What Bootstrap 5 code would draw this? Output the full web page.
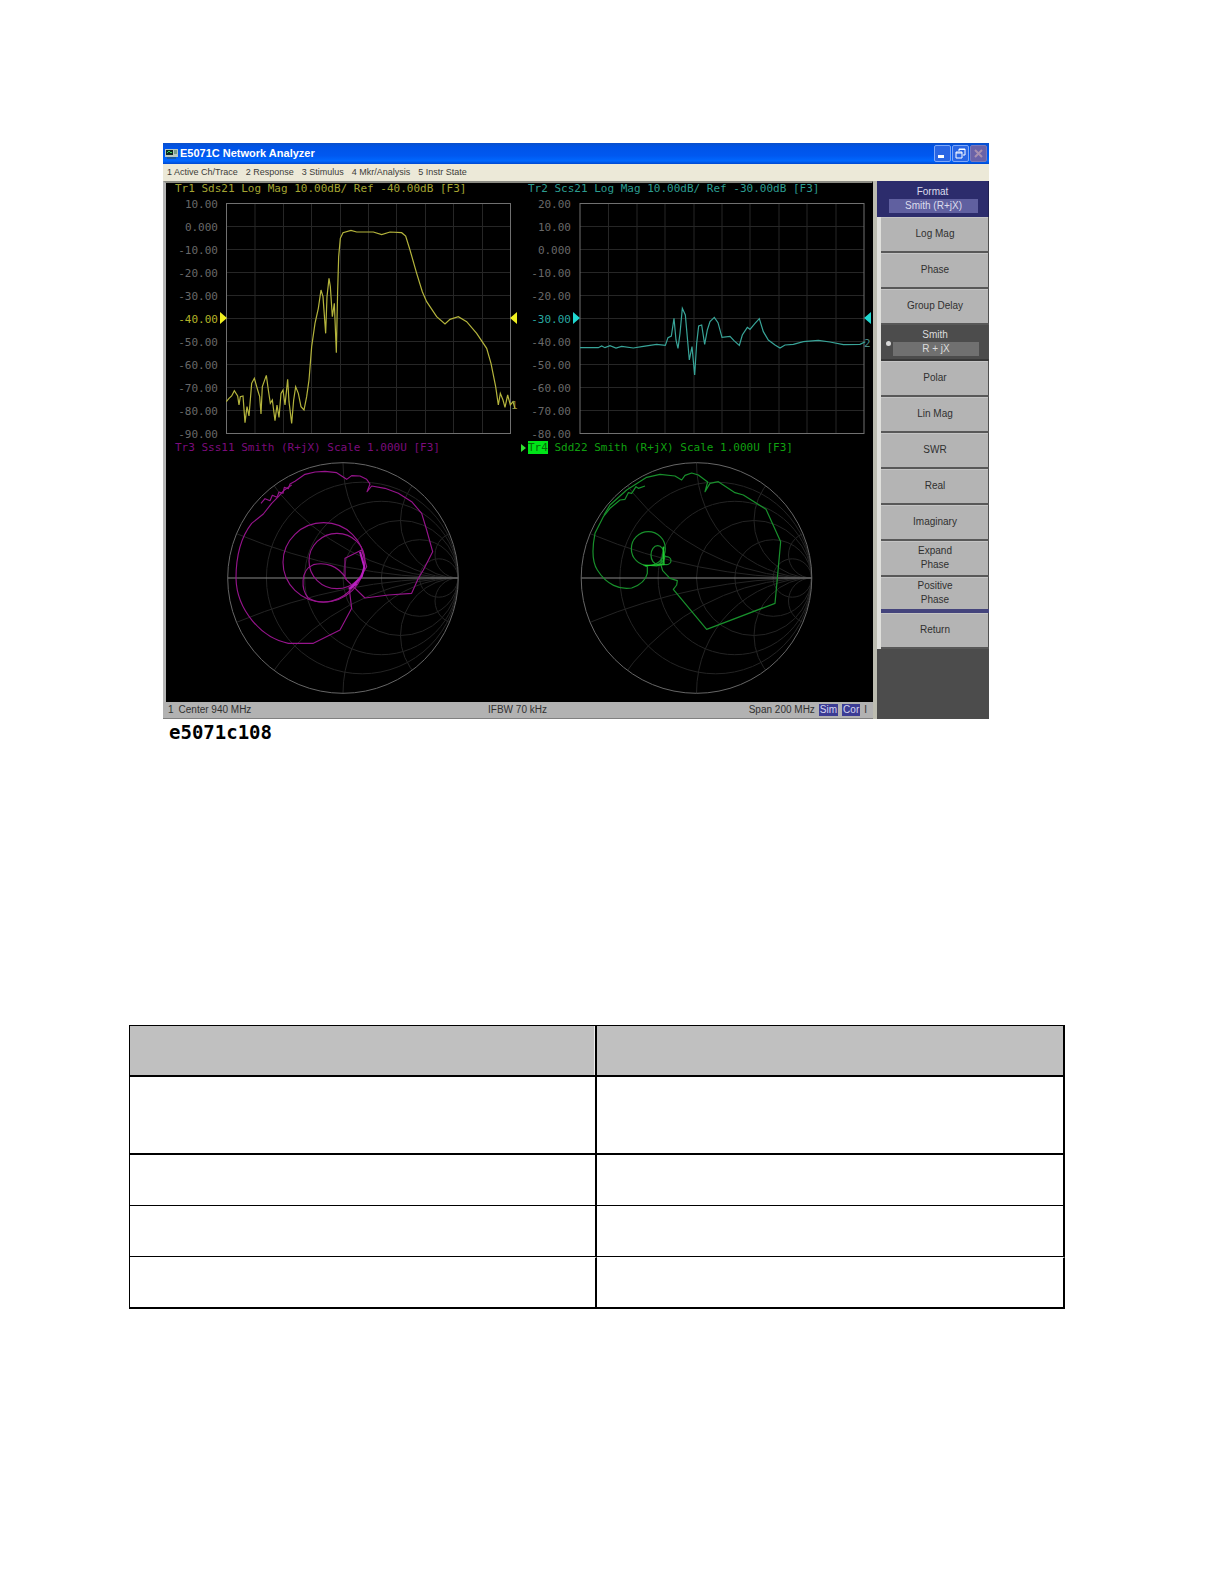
<!DOCTYPE html>
<html lang="en">
<head>
<meta charset="utf-8">
<meta name="viewport" content="width=device-width, initial-scale=1">
<title>E5071C Network Analyzer</title>
<link rel="stylesheet" href="https://cdn.jsdelivr.net/npm/bootstrap@5.3.0/dist/css/bootstrap.min.css">
<style>
body{background:#fff;color:#000;font-family:"Liberation Sans",sans-serif}
.sheet{padding:143px 159px 275px 129px}
.shot{margin:0 0 280px 34px;max-width:826px}
.titlebar{height:21px;padding:0 2px;background:linear-gradient(#0a50cc,#0054e8 20%,#0058f0 60%,#0068ff 85%,#0048d0);color:#fff;font-size:11px;font-weight:700;line-height:21px;gap:2px}
.winbtns{gap:1px}
.winbtn{width:17px;height:17px;padding:0;border:1px solid #7fa8f8;border-radius:2px;background:#2a66e4;line-height:0}
.winbtn.closer{background:#6a62a8;border-color:#7a78b8}
.menus{height:17px;background:#ece9d8;gap:8px;padding-left:4px}
.menus button{border:0;padding:0;background:none;font-size:9px;line-height:17px;color:#3c3c38}
.scope{background:#000;border-left:3px solid #b4b4b4;border-top:2px solid #8c8c84;border-right:1px solid #000;min-height:521px}
.frame-edge{border-right:4px solid #bcbcb0;min-width:0}
.tracename{font:11px/12px "DejaVu Sans Mono",monospace;height:12px;padding-left:9px;white-space:pre}
.tracename.lower{height:14px;line-height:14px}
.plot{display:block;width:100%;height:auto}
.plot text{font:11px "DejaVu Sans Mono",monospace}
.yellow{color:#a4a432}.cyan{color:#2c9c90}.purple{color:#7c0c7c}.green{color:#10a010}
.tracename.green{padding-left:2px}
.active-tag{background:#00e418;color:#086808}
.status{height:17px;background:#b2b2b2;border-bottom:1px solid #808080;font-size:10px;line-height:16px;color:#303030;padding:0 6px 0 5px}
.flag{background:#3c3c94;color:#d4d4f0;padding:0 1px;line-height:12px}
.keys{width:112px;background:#4c4c4c;font-size:10px;line-height:14px}
.keyhead{height:36px;background:#2c2c6c;color:#dcdcec;border-right:1px solid #202050;padding-top:4px}
.keyvalue{background:#6060a0;margin:0 10px 0 12px;height:14px}
.keylist{border-left:4px solid #e0e0dc}
.softkey{display:block;width:100%;height:36px;padding:0;border:0;border-bottom:2px solid #585858;background:#b4b4b4;box-shadow:inset -1px 0 #505050,inset 0 1px #c4c4c4;color:#303030;line-height:14px}
.softkey.last-key{border-bottom:4px solid #44447c}
.softkey.on{background:#4c4c4c;color:#dcdcdc;border-bottom-color:#383838;box-shadow:none;position:relative}
.softkey.on .keyvalue{background:#707070}
.dot{position:absolute;left:5px;top:16px;width:5px;height:5px;border-radius:50%;background:#d8d8d8}
.figname{font:700 19px/26px "DejaVu Sans Mono",monospace;padding-left:6px}
.spec{width:100%;table-layout:fixed;border-collapse:separate;border-spacing:0;border-left:1px solid #000;border-top:1px solid #000}
.spec th,.spec td{height:51px;padding:0;border-right:2px solid #000;border-bottom:1px solid #000}
.spec th{background:#c0c0c0;border-bottom-width:2px}
.spec th:first-child{box-shadow:inset -1px 0 #eee}
.spec .tall td{height:78px;border-bottom-width:2px}
.spec .final td{height:52px;border-top:1px solid #fff;border-bottom-width:2px}
</style>
<script src="https://cdn.jsdelivr.net/npm/bootstrap@5.3.0/dist/js/bootstrap.bundle.min.js"></script>
</head>
<body>
<main class="sheet">
<figure class="shot">
  <header class="titlebar d-flex align-items-center">
    <svg width="13" height="11" viewBox="0 0 13 11" aria-hidden="true"><rect y="1" width="13" height="8" fill="#b8c8c0"/><rect x="1" y="2" width="7" height="5" fill="#102820"/><path d="M2 5l2-2 2 2 1-1" stroke="#40d060" fill="none"/><path d="M9 3h3M9 5h3" stroke="#387050"/><path d="M2 10h9" stroke="#305050"/></svg>
    <span class="flex-grow-1">E5071C Network Analyzer</span>
    <div class="winbtns d-flex">
      <button class="winbtn" aria-label="Minimize"><svg width="15" height="15"><rect x="3" y="9" width="6" height="3" fill="#fff"/></svg></button>
      <button class="winbtn" aria-label="Restore"><svg width="15" height="15" fill="none" stroke="#fff"><path d="M6 5V3h6v6h-2M6 3.500h6"/><path d="M3 6h6v6H3zM3 7h6"/></svg></button>
      <button class="winbtn closer" aria-label="Close"><svg width="15" height="15"><path d="M4 4l7 7M11 4l-7 7" stroke="#a890b0" stroke-width="2"/></svg></button>
    </div>
  </header>
  <nav class="menus d-flex">
    <button>1 Active Ch/Trace</button><button>2 Response</button><button>3 Stimulus</button><button>4 Mkr/Analysis</button><button>5 Instr State</button>
  </nav>
  <div class="d-flex">
    <div class="flex-grow-1 frame-edge">
      <div class="scope row g-0 align-content-start">
        <section class="col-6">
          <div class="tracename yellow">Tr1 Sds21 Log Mag 10.00dB/ Ref -40.00dB [F3]</div>
          <svg class="plot" viewBox="166 195 353 246">
            <defs>
              <g id="graticule" fill="none" stroke="#262626"><path d="M28.500 0v230M57 0v230M85 0v230M114 0v230M142 0v230M170 0v230M199 0v230M227 0v230M256 0v230M0 23h284M0 46h284M0 69h284M0 92h284M0 115h284M0 138h284M0 161h284M0 184h284M0 207h284"/><rect width="284" height="230" stroke="#707070"/></g>
              <clipPath id="disc"><circle r="115"/></clipPath>
              <g id="smith" fill="none"><g clip-path="url(#disc)" stroke="#242424"><circle cx="19.200" r="95.800"/><circle cx="38.300" r="76.700"/><circle cx="57.500" r="57.500"/><circle cx="76.700" r="38.300"/><circle cx="95.800" r="19.200"/><circle cx="115" cy="-575" r="575"/><circle cx="115" cy="575" r="575"/><circle cx="115" cy="-230" r="230"/><circle cx="115" cy="230" r="230"/><circle cx="115" cy="-115" r="115"/><circle cx="115" cy="115" r="115"/><circle cx="115" cy="-57.500" r="57.500"/><circle cx="115" cy="57.500" r="57.500"/><circle cx="115" cy="-23" r="23"/><circle cx="115" cy="23" r="23"/></g><circle r="115.300" stroke="#666"/><path d="M-115 0H115" stroke="#888"/></g>
            </defs>
            <use href="#graticule" x="226.500" y="203.500"/>
            <g fill="#686868" text-anchor="end">
              <text x="218" y="208">10.00</text><text x="218" y="231">0.000</text><text x="218" y="254">-10.00</text><text x="218" y="277">-20.00</text><text x="218" y="300">-30.00</text><text x="218" y="323" fill="#b4b428">-40.00</text><text x="218" y="346">-50.00</text><text x="218" y="369">-60.00</text><text x="218" y="392">-70.00</text><text x="218" y="415">-80.00</text><text x="218" y="438">-90.00</text>
            </g>
            <path d="M220 312l7 6-7 6zM517 312l-7 6 7 6z" fill="#f0f020"/>
            <text x="511" y="409" fill="#84843c">1</text>
            <g transform="translate(155 290) scale(.33333)"><polyline fill="none" stroke="#b4b43c" stroke-width="3.600" points="214,335 222,325 230,318 238,302 248,318 252,345 256,320 264,318 270,398 276,350 282,378 290,280 298,265 308,300 314,320 318,372 322,290 334,256 340,300 346,340 352,330 360,392 366,345 372,382 378,310 384,300 390,345 398,268 402,335 410,400 416,330 422,290 430,310 438,350 447,360 455,320 462,270 470,170 480,100 490,55 498,0 504,20 512,130 516,20 522,-35 526,-10 532,80 538,40 544,188 548,0 551,-100 556,-155 564,-172 588,-179 605,-174 655,-174 680,-166 705,-174 740,-172 752,-162 765,-120 785,-50 802,5 815,35 845,80 870,102 885,88 910,80 935,95 965,130 995,175 1008,220 1022,290 1030,345 1036,310 1044,330 1050,352 1058,315 1066,345 1074,335 1080,356"/></g>
          </svg>
        </section>
        <section class="col-6">
          <div class="tracename cyan">Tr2 Scs21 Log Mag 10.00dB/ Ref -30.00dB [F3]</div>
          <svg class="plot" viewBox="519 195 353 246">
            <use href="#graticule" x="580" y="203.500"/>
            <g fill="#686868" text-anchor="end">
              <text x="571" y="208">20.00</text><text x="571" y="231">10.00</text><text x="571" y="254">0.000</text><text x="571" y="277">-10.00</text><text x="571" y="300">-20.00</text><text x="571" y="323" fill="#28a8a0">-30.00</text><text x="571" y="346">-40.00</text><text x="571" y="369">-50.00</text><text x="571" y="392">-60.00</text><text x="571" y="415">-70.00</text><text x="571" y="438">-80.00</text>
            </g>
            <path d="M573 312l7 6-7 6zM871 312l-7 6 7 6z" fill="#20d8d0"/>
            <text x="864" y="347" fill="#4c8c88">2</text>
            <g transform="translate(510 290) scale(.33333)"><polyline fill="none" stroke="#38a498" stroke-width="3.600" points="210,173 265,173 275,168 285,173 300,167 318,174 335,169 370,174 400,169 440,163 466,166 474,143 484,138 492,85 498,150 504,175 510,130 517,55 526,75 534,165 538,210 546,170 554,255 560,160 566,108 575,105 584,163 592,120 600,95 613,82 624,98 636,142 660,139 672,152 688,166 697,135 712,112 720,118 735,100 748,86 760,125 775,150 795,165 810,174 825,165 850,163 880,155 925,151 960,156 1000,164 1050,163 1066,155"/></g>
          </svg>
        </section>
        <section class="col-6">
          <div class="tracename lower purple">Tr3 Sss11 Smith (R+jX) Scale 1.000U [F3]</div>
          <svg class="plot" viewBox="166 455 353 247">
            <use href="#smith" x="343" y="578"/>
            <g transform="translate(155 440) scale(.33333)" fill="none" stroke="#96148c" stroke-width="3.400" stroke-linejoin="round">
              <polyline points="318,190 330,176 345,182 352,166 366,172 372,156 384,160 388,142 400,146 405,132 420,124 450,103 480,96 510,94 545,98 575,118 590,107 615,108 635,118 645,132 636,155 650,138 690,145 730,160 770,185 800,220 815,270 833,335 805,390 790,415 770,460 700,465 630,474 595,440"/>
              <path d="M410 135L388 150L370 170L350 190L325 222L290 250Q243 310 243 415C245 510 320 595 400 610L475 610L555 570L590 505L582 440"/>
              <ellipse cx="506" cy="367" rx="122" ry="119"/><ellipse cx="546" cy="363" rx="84" ry="83"/>
              <path d="M575 418C550 375 510 366 475 374C435 390 438 450 460 474C500 498 560 486 595 440L570 415L570 355L620 330L635 380L600 440"/>
              <path d="M615 335L628 380L620 410L585 445L605 430" stroke="#b820c0" stroke-width="6"/>
            </g>
          </svg>
        </section>
        <section class="col-6">
          <div class="tracename lower green"><svg width="7" height="10" aria-hidden="true"><path d="M0 1l5 4-5 4z" fill="#30e030"/></svg><span class="active-tag">Tr4</span> Sdd22 Smith (R+jX) Scale 1.000U [F3]</div>
          <svg class="plot" viewBox="519 455 353 247">
            <use href="#smith" x="696.500" y="578"/>
            <g transform="translate(510 440) scale(.33333)" fill="none" stroke="#18902c" stroke-width="3.600" stroke-linejoin="round">
              <path d="M405 138L385 145L378 140L365 160L355 158L345 178L330 180L300 205L280 230L255 280Q240 355 262 390C290 435 330 450 365 444Q405 430 412 400V380L400 375L440 378L458 372L465 345"/>
              <circle cx="415" cy="326" r="51"/><ellipse cx="443" cy="345" rx="20" ry="28"/><ellipse cx="468" cy="362" rx="15" ry="12"/>
              <polyline points="462,320 458,345 452,372 458,392 480,415 502,422 500,435 490,448 590,568 795,490 802,415 812,305 768,208 700,165 675,158 625,125 600,130 585,155 593,126 565,105 545,99 525,106 515,120 495,108 450,103 410,112 350,150 300,195 282,225"/>
              <path d="M404 377L462 374L460 320" stroke="#20d030" stroke-width="4"/>
            </g>
          </svg>
        </section>
      </div>
      <footer class="status d-flex align-items-center justify-content-between">
        <span class="col">1&ensp;Center 940 MHz</span><span>IFBW 70 kHz</span>
        <span class="col d-flex justify-content-end align-items-center gap-1"><span>Span 200 MHz</span><span class="flag">Sim</span><span class="flag">Cor</span><span>I</span></span>
      </footer>
    </div>
    <aside class="keys flex-shrink-0 text-center">
      <div class="keyhead">Format<div class="keyvalue">Smith (R+jX)</div></div>
      <div class="keylist">
      <button class="softkey">Log Mag</button>
      <button class="softkey">Phase</button>
      <button class="softkey">Group Delay</button>
      <button class="softkey on"><span class="dot"></span>Smith<div class="keyvalue">R + jX</div></button>
      <button class="softkey">Polar</button>
      <button class="softkey">Lin Mag</button>
      <button class="softkey">SWR</button>
      <button class="softkey">Real</button>
      <button class="softkey">Imaginary</button>
      <button class="softkey">Expand<br>Phase</button>
      <button class="softkey last-key">Positive<br>Phase</button>
      <button class="softkey">Return</button>
      </div>
    </aside>
  </div>
  <figcaption class="figname">e5071c108</figcaption>
</figure>
<table class="spec">
  <colgroup><col style="width:467px"><col></colgroup>
  <thead><tr><th></th><th></th></tr></thead>
  <tbody>
    <tr class="tall"><td></td><td></td></tr>
    <tr><td></td><td></td></tr>
    <tr><td></td><td></td></tr>
    <tr class="final"><td></td><td></td></tr>
  </tbody>
</table>
</main>
</body>
</html>
